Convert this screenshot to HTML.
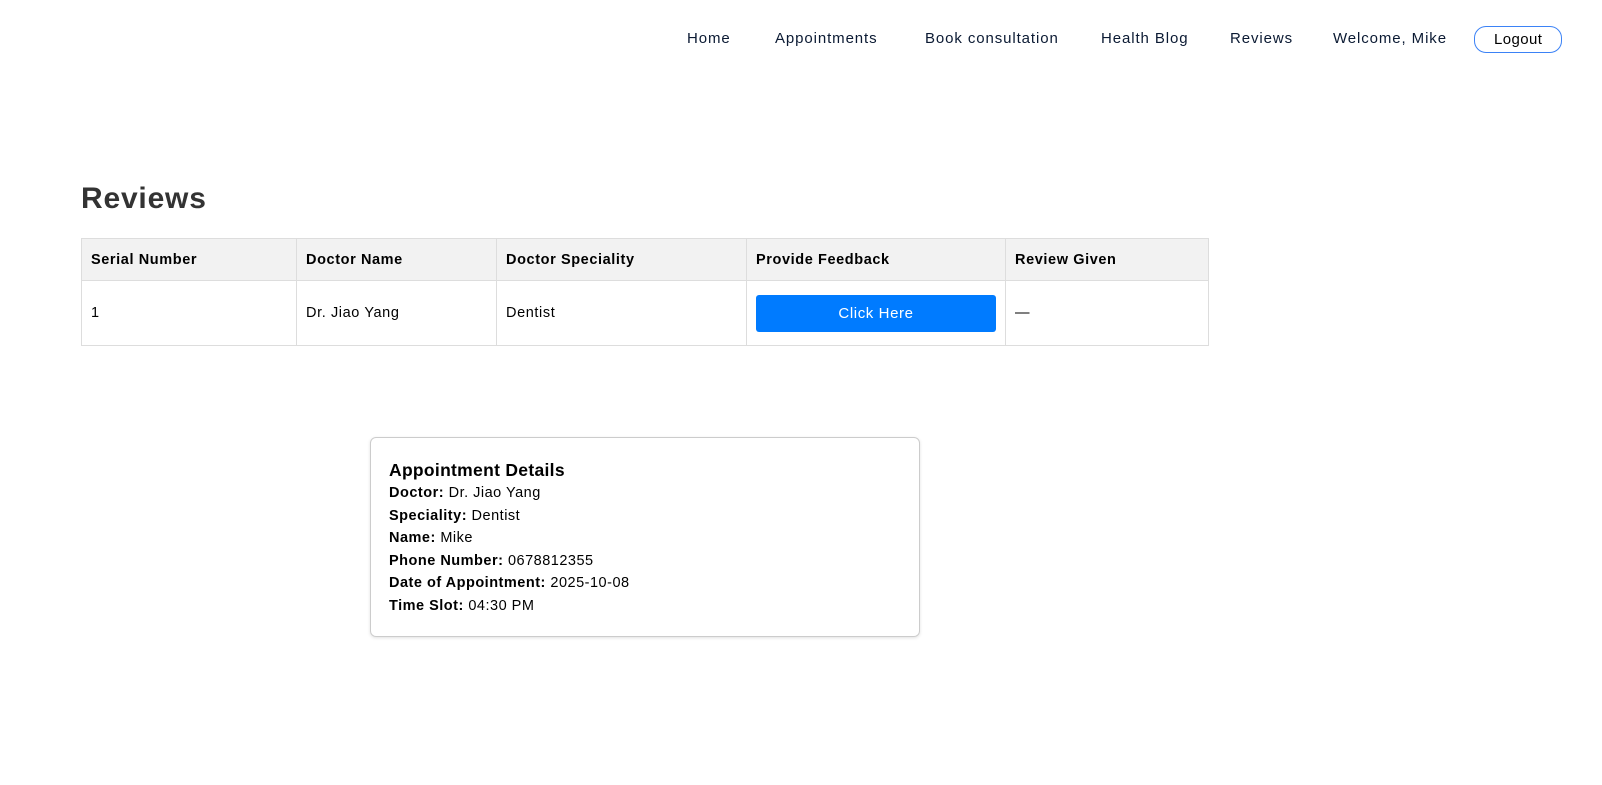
<!DOCTYPE html>
<html><head><meta charset="utf-8"><style>
*{margin:0;padding:0;box-sizing:border-box}
body{width:1602px;height:785px;background:#fff;font-family:"Liberation Sans",sans-serif;color:#000;position:relative;overflow:hidden}
.nav a{position:absolute;top:30px;font-size:15px;color:#0b1a33;text-decoration:none;letter-spacing:0.9px}
.logout{position:absolute;left:1474px;top:26px;width:88px;height:27px;border:1px solid #3b82f6;border-radius:12px;font-size:15px;padding:4px 0 0 19px;letter-spacing:0.4px}
h1{position:absolute;left:81px;top:182px;font-size:30px;font-weight:bold;color:#333;letter-spacing:0.8px}
table{position:absolute;left:81px;top:238px;border-collapse:collapse;font-size:14.5px;letter-spacing:0.6px}
td,th{border:1px solid #ddd;text-align:left;padding:0 9px}
th{background:#f2f2f2;height:42px;font-weight:bold}
td{height:65px}
.btn{display:block;width:240px;height:37px;background:#007bff;color:#fff;border-radius:3px;text-align:center;line-height:37px;font-size:15px}
.card{position:absolute;left:370px;top:437px;width:550px;height:200px;border:1px solid #ccc;border-radius:6px;box-shadow:0 1px 3px rgba(0,0,0,.12);padding:21px 18px;font-size:14.5px;line-height:22.5px;letter-spacing:0.5px}
.card h3{font-size:17.5px;line-height:22px;margin-bottom:1px;letter-spacing:0.3px}
</style></head><body>
<div class="nav">
<a style="left:687px">Home</a>
<a style="left:775px">Appointments</a>
<a style="left:925px">Book consultation</a>
<a style="left:1101px">Health Blog</a>
<a style="left:1230px">Reviews</a>
<a style="left:1333px">Welcome, Mike</a>
</div>
<div class="logout">Logout</div>
<h1>Reviews</h1>
<table>
<tr><th style="width:215px">Serial Number</th><th style="width:200px">Doctor Name</th><th style="width:250px">Doctor Speciality</th><th style="width:259px">Provide Feedback</th><th style="width:203px">Review Given</th></tr>
<tr><td>1</td><td>Dr. Jiao Yang</td><td>Dentist</td><td><span class="btn">Click Here</span></td><td>—</td></tr>
</table>
<div class="card">
<h3>Appointment Details</h3>
<div><b>Doctor:</b> Dr. Jiao Yang</div>
<div><b>Speciality:</b> Dentist</div>
<div><b>Name:</b> Mike</div>
<div><b>Phone Number:</b> 0678812355</div>
<div><b>Date of Appointment:</b> 2025-10-08</div>
<div><b>Time Slot:</b> 04:30 PM</div>
</div>
</body></html>
